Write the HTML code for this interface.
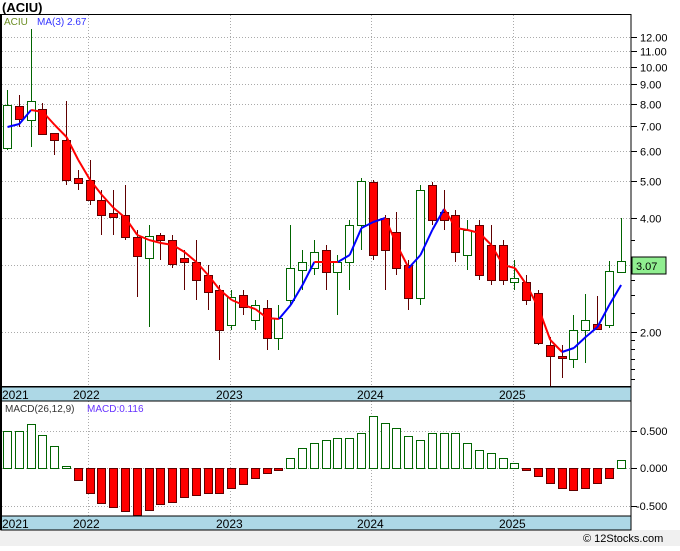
<!DOCTYPE html>
<html><head><meta charset="utf-8"><style>
html,body{margin:0;padding:0;background:#fff;}
body{width:680px;height:546px;overflow:hidden;position:relative;font-family:"Liberation Sans",sans-serif;}
</style></head><body>
<svg id="s" width="680" height="546" xmlns="http://www.w3.org/2000/svg" font-family="Liberation Sans, DejaVu Sans, sans-serif">
<rect x="0" y="0" width="680" height="546" fill="#fff"/>
<rect x="0" y="530" width="680" height="16" fill="#f0f0f0"/>
<text x="2" y="12" font-size="13" font-weight="bold" fill="#000">(ACIU)</text>
<g id="g"></g>
<text x="4" y="25" font-size="10" fill="#6b8e23">ACIU</text>
<text x="37" y="25" font-size="10" fill="#3333ff">MA(3)  2.67</text>
<text x="5" y="412" font-size="10" fill="#333">MACD(26,12,9)</text>
<text x="87" y="412" font-size="10" fill="#6633ff">MACD:0.116</text>
<text x="583" y="542" font-size="11" fill="#000">© 12Stocks.com</text>
</svg>
<script>
var g=document.getElementById('g'),h='';
function Y(p){return 332-164.6*Math.log(p/2);}
[12,11,10,9,8,7,6,5,4,3,2].forEach(function(p){var y=Math.round(Y(p))+.5;
h+='<line x1="2" x2="631" y1="'+y+'" y2="'+y+'" stroke="#aaa" stroke-dasharray="1,2"/>';
h+='<line x1="631" x2="637" y1="'+y+'" y2="'+y+'" stroke="#000"/>';
h+='<text x="640" y="'+(y+4)+'" font-size="11" fill="#000">'+p.toFixed(2)+'</text>';});
[1.9,1.8,1.7,1.6,1.5,3.5,2.5,2.25,2.75].forEach(function(p){var y=Math.round(Y(p))+.5;if(y<387)h+='<line x1="631" x2="635" y1="'+y+'" y2="'+y+'" stroke="#000"/>';});
[88,230,371,513].forEach(function(x){h+='<line x1="'+(x+.5)+'" x2="'+(x+.5)+'" y1="15" y2="387" stroke="#aaa" stroke-dasharray="1,2"/><line x1="'+(x+.5)+'" x2="'+(x+.5)+'" y1="401" y2="516" stroke="#aaa" stroke-dasharray="1,2"/>';});
[[431,'0.500'],[468,'0.000'],[506,'-0.500']].forEach(function(a){h+='<line x1="2" x2="631" y1="'+(a[0]+.5)+'" y2="'+(a[0]+.5)+'" stroke="#aaa" stroke-dasharray="1,2"/><line x1="631" x2="637" y1="'+(a[0]+.5)+'" y2="'+(a[0]+.5)+'" stroke="#000"/><text x="'+(a[1][0]=='-'?636:640)+'" y="'+(a[0]+4)+'" font-size="11">'+a[1]+'</text>';});
var C=[['g',105,148,90,150],['r',106,119,95,127],['g',101,120,29,147],['r',109,134,103,135],['r',133,140,133,155],['r',140,180,101,185],['r',178,183,170,190],['r',180,200,160,205],['r',200,215,190,235],['r',213,217,190,235],['r',215,237,185,240],['r',237,256,230,297],['g',236,258,225,327],['r',235,240,233,260],['r',240,264,235,268],['r',258,262,250,290],['r',262,280,240,300],['r',275,292,265,310],['r',290,330,285,360],['g',297,325,290,330],['r',295,307,290,315],['g',305,320,300,330],['r',308,338,300,350],['g',318,338,305,350],['g',268,300,225,305],['g',262,270,250,290],['g',252,268,240,275],['r',250,272,245,290],['g',262,272,255,315],['g',225,262,220,290],['g',181,225,178,250],['r',182,255,180,260],['r',218,250,215,290],['r',232,268,212,275],['r',265,298,260,310],['g',190,298,185,305],['r',185,220,182,225],['r',212,220,190,230],['r',215,252,210,262],['g',230,255,220,270],['r',225,275,220,280],['r',245,280,225,285],['r',245,280,240,285],['g',278,282,260,290],['r',282,300,275,305],['r',293,343,290,345],['r',345,356,337,387],['r',356,358,345,378],['g',330,359,315,368],['g',320,330,294,363],['r',324,329,296,330],['g',271,325,261,328],['g',261,272,218,273]];
var M=[127,124,110,112,125,137,160,180,195,208,218,235,240,243,245,252,262,275,290,300,305,309,318,319,305,285,262,262,262,255,228,222,218,245,268,255,230,209,228,230,233,245,265,268,285,308,340,352,348,337,327,305,285];
var D=[37,37,44,33,22,2,-12,-25,-35,-39,-43,-47,-42,-36,-34,-29,-27,-25,-25,-20,-16,-10,-5,-2,10,20,25,28,30,30,35,52,45,40,32,28,35,35,35,25,18,15,10,5,-2,-8,-15,-20,-22,-20,-15,-10,-2,8];
D.splice(52,1);
C.forEach(function(c,i){var x=Math.round(7+11.8*i);
var col=c[0]=='g'?'#006400':'#600000';
h+='<line x1="'+(x+.5)+'" x2="'+(x+.5)+'" y1="'+c[3]+'" y2="'+c[4]+'" stroke="'+col+'"/>';
h+='<rect x="'+(x-3.5)+'" y="'+c[1]+'.5" width="8" height="'+Math.max(1,c[2]-c[1])+'" fill="'+(c[0]=='g'?'#fff':'#f00')+'" stroke="'+col+'"/>';
var v=D[i],bx=x-3.5;
if(v>=0)h+='<rect x="'+bx+'" y="'+(468-v)+'.5" width="8" height="'+Math.max(1,v)+'" fill="#fff" stroke="#006400"/>';
else h+='<rect x="'+bx+'" y="468.5" width="8" height="'+(-v)+'" fill="#f00" stroke="#600000"/>';
});
for(var i=1;i<M.length;i++){var x0=7+11.8*(i-1)+.5,x1=7+11.8*i+.5;var col=M[i]<M[i-1]?'#0000ff':'#ff0000';
h+='<line x1="'+x0+'" y1="'+M[i-1]+'" x2="'+x1+'" y2="'+M[i]+'" stroke="'+col+'" stroke-width="2"/>';}
[[387,401],[516,530]].forEach(function(a){h+='<rect x="1" y="'+a[0]+'" width="630" height="'+(a[1]-a[0])+'" fill="#add8e6" stroke="#000"/>';
[[2,'2021'],[73,'2022'],[216,'2023'],[357,'2024'],[499,'2025']].forEach(function(t){h+='<text x="'+t[0]+'" y="'+(a[0]+12)+'" font-size="12" fill="#000">'+t[1]+'</text>';});});
h+='<rect x="1" y="14.5" width="630" height="372" fill="none" stroke="#000"/>';
h+='<line x1="1" x2="1" y1="14" y2="530" stroke="#000" stroke-width="2"/>';
h+='<rect x="1" y="401" width="630" height="129" fill="none" stroke="#000"/>';
h+='<rect x="632" y="257" width="34" height="17" fill="#90ee90" stroke="#000"/><text x="636" y="270" font-size="11">3.07</text>';
g.innerHTML=h;
</script>
</body></html>
